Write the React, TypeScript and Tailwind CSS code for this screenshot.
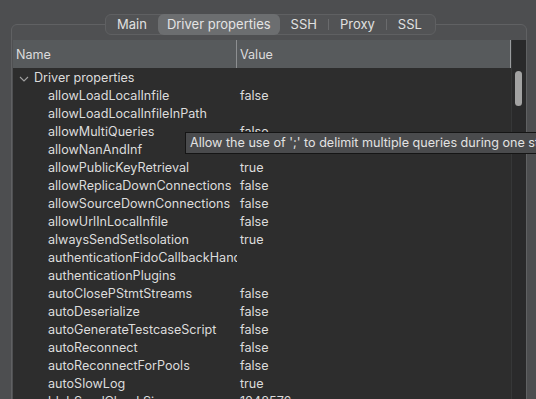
import React from "react";

const rows: [string, string][] = [
  ["allowLoadLocalInfile", "false"],
  ["allowLoadLocalInfileInPath", ""],
  ["allowMultiQueries", "false"],
  ["allowNanAndInf", ""],
  ["allowPublicKeyRetrieval", "true"],
  ["allowReplicaDownConnections", "false"],
  ["allowSourceDownConnections", "false"],
  ["allowUrlInLocalInfile", "false"],
  ["alwaysSendSetIsolation", "true"],
  ["authenticationFidoCallbackHandler", ""],
  ["authenticationPlugins", ""],
  ["autoClosePStmtStreams", "false"],
  ["autoDeserialize", "false"],
  ["autoGenerateTestcaseScript", "false"],
  ["autoReconnect", "false"],
  ["autoReconnectForPools", "false"],
  ["autoSlowLog", "true"],
  ["blobSendChunkSize", "1048576"],
];

const tabs = ["Main", "Driver properties", "SSH", "Proxy", "SSL"];

export default function App() {
  return (
    <div
      className="relative w-[536px] h-[399px] overflow-hidden bg-[#4d4e50] text-[12.6px] text-[#dcdcdc]"
      style={{ fontFamily: "Inter, 'Noto Sans', sans-serif" }}
    >
      <div className="pt-[24px]">
        <div className="ml-[11px] w-[516px] h-[400px] border border-[#606163] rounded-[6px] bg-[#4f5052] pt-[15px] pl-px">
          <div className="flex h-[400px]">
            <div className="w-[498px] flex flex-col">
              <div className="flex h-[28px] bg-[#575a5c] items-center">
                <div className="w-[224px] pl-[3px] pt-[2px] h-full flex items-center border-r border-[#8d8f91]">
                  Name
                </div>
                <div className="flex-1 pl-[3px] pt-[2px] h-full flex items-center border-r border-[#9a9c9e]">
                  Value
                </div>
              </div>
              <div className="flex-1 bg-[#2d2d2d] flex flex-col pt-[1px]">
                <div className="h-[18px] flex items-center pt-[1px]">
                  <svg width="20" height="18" viewBox="0 0 20 18" className="ml-[3px] shrink-0">
                    <polyline points="4,7 8,11 12,7" fill="none" stroke="#a0a0a0" strokeWidth="1.1" />
                  </svg>
                  <span className="whitespace-nowrap ml-[-2px]">Driver properties</span>
                </div>
                {rows.map(([n, v]) => (
                  <div key={n} className="h-[18px] flex items-center pt-[1px]">
                    <div className="w-[224px] pl-[35px] overflow-hidden whitespace-nowrap">{n}</div>
                    <div className="pl-[3px] whitespace-nowrap">{v}</div>
                  </div>
                ))}
              </div>
            </div>
            <div className="w-[15px] bg-[#2a2a2b] border-l border-[#363738] relative">
              <div className="absolute left-[3px] top-[31px] w-[7px] h-[35px] rounded-full bg-[#a3a3a3]" />
            </div>
          </div>
        </div>
      </div>

      <div className="absolute left-[105px] top-[14px] w-[331px] h-[21px] rounded-[6px] border border-[#5f6062] bg-[#525355] flex items-center text-[13px]">
        {tabs.map((t, i) => {
          const sel = i === 1;
          const sep = i >= 3;
          return (
            <div key={t} className="flex items-center h-full">
              {sep && <div className="w-px h-[11px] bg-[#6a6b6d]" />}
              <div
                className={
                  sel
                    ? "h-[21px] -my-px px-[9px] flex items-center rounded-[6px] bg-[#6c6e70] text-[#e4e4e4]"
                    : "h-full px-[11px] flex items-center text-[#e0e0e0]"
                }
              >
                {t}
              </div>
            </div>
          );
        })}
      </div>

      <div className="absolute left-[185px] top-[132px] h-[22px] pl-[4px] pr-2 flex items-center whitespace-nowrap bg-[#4a4b4d] border border-[#151515] text-[#e2e2e2]">
        Allow the use of ';' to delimit multiple queries during one statement
      </div>
    </div>
  );
}
